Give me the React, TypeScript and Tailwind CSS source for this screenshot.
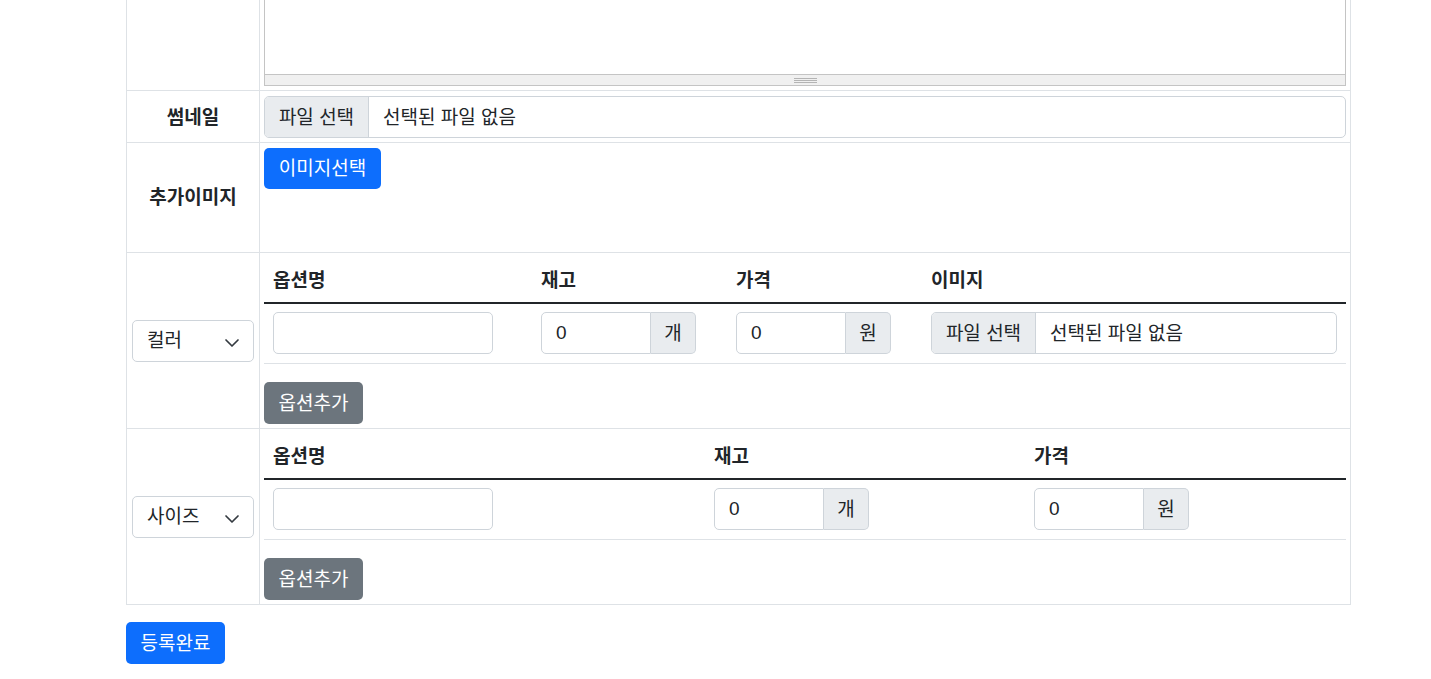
import React from 'react'

const Chevron = () => (
  <svg width="16" height="12" viewBox="0 0 16 12" fill="none" className="mt-[2px]">
    <path d="m2 4 6 6 6-6" stroke="#343a40" strokeWidth="1.7" strokeLinecap="round" strokeLinejoin="round" />
  </svg>
)

const FileInput = ({ className = '' }: { className?: string }) => (
  <div className={`flex h-[42px] border border-[#ced4da] rounded-[5px] overflow-hidden bg-white ${className}`}>
    <div className="w-[104px] shrink-0 bg-[#e9ecef] border-r border-[#ced4da] flex items-center justify-center pt-[2px]">파일 선택</div>
    <div className="pl-[14px] flex items-center pt-[2px]">선택된 파일 없음</div>
  </div>
)

const UnitInput = ({ unit }: { unit: string }) => (
  <div className="flex h-[42px] w-[155px]">
    <input
      type="text"
      readOnly
      value="0"
      className="w-[110px] h-full border border-[#ced4da] rounded-l-[5px] pl-[14px] outline-none bg-white text-[#212529]"
    />
    <div className="w-[45px] border-y border-r border-[#ced4da] bg-[#e9ecef] rounded-r-[5px] flex items-center justify-center pt-[2px]">
      {unit}
    </div>
  </div>
)

const TextInput = () => (
  <input type="text" className="w-[220px] h-[42px] border border-[#ced4da] rounded-[5px] outline-none bg-white" />
)

const OptionSelect = ({ label }: { label: string }) => (
  <div className="w-[122px] h-[42px] border border-[#ced4da] rounded-[5px] bg-white flex items-center justify-between pl-[14px] pr-[13px]">
    <span className="pt-[2px]">{label}</span>
    <Chevron />
  </div>
)

const AddButton = () => (
  <button className="mt-[18px] w-[99px] h-[42px] rounded-[5px] bg-[#6c757d] text-white flex items-center justify-center pt-[2px]">
    옵션추가
  </button>
)

export default function App() {
  return (
    <div className="bg-white min-h-screen text-[#212529] text-[19px] font-['Liberation_Sans','Noto_Sans_CJK_KR',sans-serif]">
      <div className="ml-[126px] w-[1225px] border-x border-[#dee2e6]">
        {/* 상세설명 editor (scrolled) */}
        <div className="flex h-[91px] border-b border-[#dee2e6]">
          <div className="w-[133px] shrink-0 border-r border-[#dee2e6]" />
          <div className="flex-1 px-[4px]">
            <div className="h-[86px] border-x border-b border-[#c4c4c4] flex flex-col bg-white">
              <div className="flex-1" />
              <div className="h-[11px] border-t border-[#c4c4c4] bg-[#f0f0f0] flex items-center justify-center">
                <svg width="23" height="5" viewBox="0 0 23 5">
                  <path d="M0 0.5h23M0 2.5h23M0 4.5h23" stroke="#b4b4b4" strokeWidth="1" />
                </svg>
              </div>
            </div>
          </div>
        </div>

        {/* 썸네일 */}
        <div className="flex h-[52px] border-b border-[#dee2e6]">
          <div className="w-[133px] shrink-0 border-r border-[#dee2e6] flex items-center justify-center font-bold pt-[3px]">썸네일</div>
          <div className="flex-1 px-[4px] pt-[5px]">
            <FileInput />
          </div>
        </div>

        {/* 추가이미지 */}
        <div className="flex h-[110px] border-b border-[#dee2e6]">
          <div className="w-[133px] shrink-0 border-r border-[#dee2e6] flex items-center justify-center font-bold pt-[2px]">추가이미지</div>
          <div className="flex-1 px-[4px] pt-[5px]">
            <button className="w-[117px] h-[41px] rounded-[5px] bg-[#0d6efd] text-white flex items-center justify-center pt-[2px]">
              이미지선택
            </button>
          </div>
        </div>

        {/* 컬러 */}
        <div className="flex h-[176px] border-b border-[#dee2e6]">
          <div className="w-[133px] shrink-0 border-r border-[#dee2e6] flex items-center px-[5px]">
            <OptionSelect label="컬러" />
          </div>
          <div className="flex-1 px-[4px] pt-[5px]">
            <div className="grid grid-cols-[268px_195px_195px_424px] h-[46px] border-b-2 border-[#212529] font-bold">
              <div className="px-[9px] flex items-center pt-[2px]">옵션명</div>
              <div className="px-[9px] flex items-center pt-[2px]">재고</div>
              <div className="px-[9px] flex items-center pt-[2px]">가격</div>
              <div className="px-[9px] flex items-center pt-[2px]">이미지</div>
            </div>
            <div className="grid grid-cols-[268px_195px_195px_424px] h-[60px] border-b border-[#dee2e6]">
              <div className="px-[9px] pt-2"><TextInput /></div>
              <div className="px-[9px] pt-2"><UnitInput unit="개" /></div>
              <div className="px-[9px] pt-2"><UnitInput unit="원" /></div>
              <div className="px-[9px] pt-2"><FileInput /></div>
            </div>
            <AddButton />
          </div>
        </div>

        {/* 사이즈 */}
        <div className="flex h-[176px] border-b border-[#dee2e6]">
          <div className="w-[133px] shrink-0 border-r border-[#dee2e6] flex items-center px-[5px]">
            <OptionSelect label="사이즈" />
          </div>
          <div className="flex-1 px-[4px] pt-[5px]">
            <div className="grid grid-cols-[441px_320px_321px] h-[46px] border-b-2 border-[#212529] font-bold">
              <div className="px-[9px] flex items-center pt-[2px]">옵션명</div>
              <div className="px-[9px] flex items-center pt-[2px]">재고</div>
              <div className="px-[9px] flex items-center pt-[2px]">가격</div>
            </div>
            <div className="grid grid-cols-[441px_320px_321px] h-[60px] border-b border-[#dee2e6]">
              <div className="px-[9px] pt-2"><TextInput /></div>
              <div className="px-[9px] pt-2"><UnitInput unit="개" /></div>
              <div className="px-[9px] pt-2"><UnitInput unit="원" /></div>
            </div>
            <AddButton />
          </div>
        </div>
      </div>

      <button className="ml-[126px] mt-[17px] w-[99px] h-[42px] rounded-[5px] bg-[#0d6efd] text-white flex items-center justify-center pt-[2px]">
        등록완료
      </button>
    </div>
  )
}
